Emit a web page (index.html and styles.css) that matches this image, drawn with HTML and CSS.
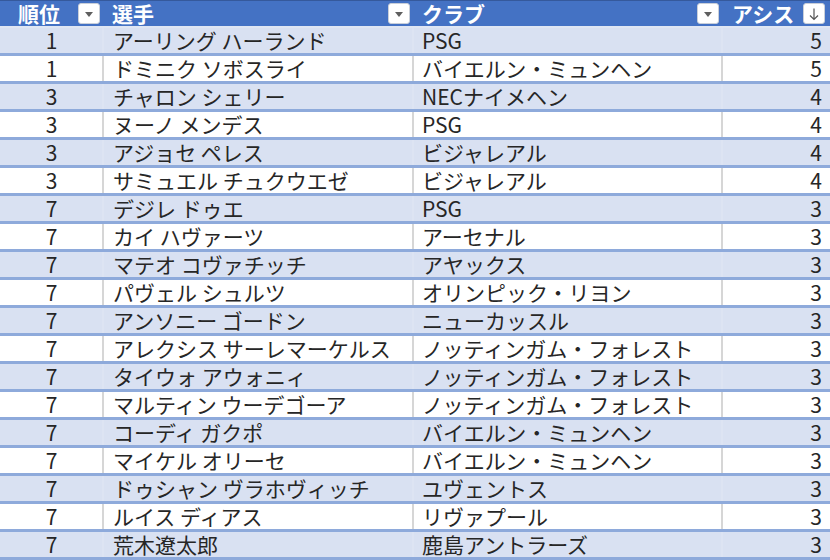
FILE: index.html
```html
<!DOCTYPE html>
<html lang="ja">
<head>
<meta charset="utf-8">
<title>アシスト ランキング</title>
<link rel="stylesheet" href="styles.css">
</head>
<body>
<div class="sheet">
  <div class="row head">
    <div class="hcell c1"><span class="hlabel">順位</span><span class="btn"><span class="tri"></span></span></div>
    <div class="hcell c2"><span class="hlabel">選手</span><span class="btn"><span class="tri"></span></span></div>
    <div class="hcell c3"><span class="hlabel">クラブ</span><span class="btn"><span class="tri"></span></span></div>
    <div class="hcell c4"><span class="hlabel">アシス</span><span class="btn"><svg class="arrow" width="12" height="14" viewBox="0 0 12 14"><path d="M6 1.5V12.5M2 8.5L6 12.5L10 8.5" fill="none" stroke="#555" stroke-width="1.2"/></svg></span></div>
  </div>
  <div class="row band"><div class="cell rank">1</div><div class="cell name">アーリング ハーランド</div><div class="cell club">PSG</div><div class="cell num">5</div></div>
  <div class="row"><div class="cell rank">1</div><div class="cell name">ドミニク ソボスライ</div><div class="cell club">バイエルン・ミュンヘン</div><div class="cell num">5</div></div>
  <div class="row band"><div class="cell rank">3</div><div class="cell name">チャロン シェリー</div><div class="cell club">NECナイメヘン</div><div class="cell num">4</div></div>
  <div class="row"><div class="cell rank">3</div><div class="cell name">ヌーノ メンデス</div><div class="cell club">PSG</div><div class="cell num">4</div></div>
  <div class="row band"><div class="cell rank">3</div><div class="cell name">アジョセ ペレス</div><div class="cell club">ビジャレアル</div><div class="cell num">4</div></div>
  <div class="row"><div class="cell rank">3</div><div class="cell name">サミュエル チュクウエゼ</div><div class="cell club">ビジャレアル</div><div class="cell num">4</div></div>
  <div class="row band"><div class="cell rank">7</div><div class="cell name">デジレ ドゥエ</div><div class="cell club">PSG</div><div class="cell num">3</div></div>
  <div class="row"><div class="cell rank">7</div><div class="cell name">カイ ハヴァーツ</div><div class="cell club">アーセナル</div><div class="cell num">3</div></div>
  <div class="row band"><div class="cell rank">7</div><div class="cell name">マテオ コヴァチッチ</div><div class="cell club">アヤックス</div><div class="cell num">3</div></div>
  <div class="row"><div class="cell rank">7</div><div class="cell name">パヴェル シュルツ</div><div class="cell club">オリンピック・リヨン</div><div class="cell num">3</div></div>
  <div class="row band"><div class="cell rank">7</div><div class="cell name">アンソニー ゴードン</div><div class="cell club">ニューカッスル</div><div class="cell num">3</div></div>
  <div class="row"><div class="cell rank">7</div><div class="cell name">アレクシス サーレマーケルス</div><div class="cell club">ノッティンガム・フォレスト</div><div class="cell num">3</div></div>
  <div class="row band"><div class="cell rank">7</div><div class="cell name">タイウォ アウォニィ</div><div class="cell club">ノッティンガム・フォレスト</div><div class="cell num">3</div></div>
  <div class="row"><div class="cell rank">7</div><div class="cell name">マルティン ウーデゴーア</div><div class="cell club">ノッティンガム・フォレスト</div><div class="cell num">3</div></div>
  <div class="row band"><div class="cell rank">7</div><div class="cell name">コーディ ガクポ</div><div class="cell club">バイエルン・ミュンヘン</div><div class="cell num">3</div></div>
  <div class="row"><div class="cell rank">7</div><div class="cell name">マイケル オリーセ</div><div class="cell club">バイエルン・ミュンヘン</div><div class="cell num">3</div></div>
  <div class="row band"><div class="cell rank">7</div><div class="cell name">ドゥシャン ヴラホヴィッチ</div><div class="cell club">ユヴェントス</div><div class="cell num">3</div></div>
  <div class="row"><div class="cell rank">7</div><div class="cell name">ルイス ディアス</div><div class="cell club">リヴァプール</div><div class="cell num">3</div></div>
  <div class="row band"><div class="cell rank">7</div><div class="cell name">荒木遼太郎</div><div class="cell club">鹿島アントラーズ</div><div class="cell num">3</div></div>
</div>
</body>
</html>
```

FILE: styles.css
```css
html, body {
  margin: 0;
  padding: 0;
  background: #ffffff;
}

.sheet {
  width: 830px;
  font-family: "Noto Sans CJK JP", "Noto Sans", sans-serif;
  font-size: 21px;
  color: #262626;
}

.row {
  display: grid;
  grid-template-columns: 103px 310px 309px 108px;
  height: 28px;
  box-sizing: border-box;
  border-bottom: 3px solid #8eaadb;
  background: #ffffff;
}

.row.band {
  background: #d9e1f2;
}

.row.head {
  background: #4472c4;
  border-top: 1px solid #35599c;
  border-bottom: 2px solid #dfe6f3;
}

.hcell {
  display: flex;
  align-items: center;
  color: #ffffff;
  font-weight: 700;
  height: 25px;
}

.hcell.c1 { padding-left: 18px; padding-right: 3px; }
.hcell.c2 { padding-left: 9px; padding-right: 3px; }
.hcell.c3 { padding-left: 9px; padding-right: 3px; }
.hcell.c4 { padding-left: 10px; padding-right: 5px; }

.hlabel {
  margin-right: auto;
  white-space: nowrap;
  line-height: 25px;
}

.btn {
  flex: none;
  width: 22px;
  height: 21px;
  box-sizing: border-box;
  background: #ffffff;
  border: 1px solid #c9cfd9;
  border-radius: 3px;
  display: flex;
  align-items: center;
  justify-content: center;
}

.tri {
  width: 0;
  height: 0;
  border-left: 4px solid transparent;
  border-right: 4px solid transparent;
  border-top: 5px solid #5f5f5f;
  margin-top: 1px;
}

.arrow {
  display: block;
}

.cell {
  line-height: 25px;
  white-space: nowrap;
}

.row .cell + .cell {
  border-left: 2px solid #d6d6d6;
  margin-left: -1px;
}

.row.band .cell + .cell {
  border-left-color: #dde4f3;
}

.rank {
  text-align: center;
}

.name {
  padding-left: 9px;
}

.club {
  padding-left: 8px;
}

.num {
  text-align: right;
  padding-right: 8px;
}
```
